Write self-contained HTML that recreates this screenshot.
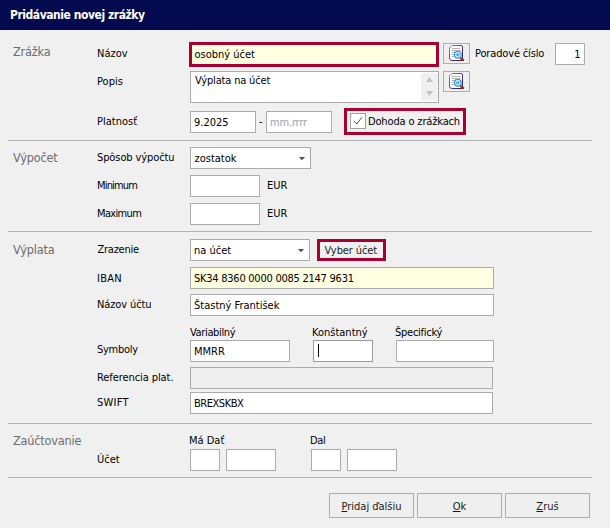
<!DOCTYPE html>
<html lang="sk">
<head>
<meta charset="utf-8">
<title>Pridávanie novej zrážky</title>
<style>
html,body{margin:0;padding:0;}
body{width:610px;height:528px;overflow:hidden;background:#f0f0f0;position:relative;
 font-family:"DejaVu Sans Condensed","DejaVu Sans","Liberation Sans",sans-serif;font-size:11px;color:#000;}
.a{position:absolute;white-space:nowrap;line-height:14px;}
.title{left:0;top:0;width:610px;height:30px;background:#03094f;}
.title span{position:absolute;left:10px;top:8px;color:#fff;font-weight:bold;font-size:12px;line-height:14px;letter-spacing:-0.45px;}
.sec{color:#6d6d6d;font-size:12.6px;line-height:16px;letter-spacing:-0.2px;}
.in{position:absolute;box-sizing:border-box;border:1px solid #ababab;background:#fff;}
.in span{position:absolute;left:3px;top:4px;line-height:14px;white-space:nowrap;}
.hl{position:absolute;box-sizing:border-box;border:3px solid #a80030;}
.sep{position:absolute;left:8px;width:584px;height:1px;background:#b2b2b2;}
.btn{position:absolute;box-sizing:border-box;border:1px solid #adadad;background:#efefef;text-align:center;line-height:26px;color:#1a1a1a;}
.yel{background:#ffffe1;}
.ph{color:#9ba3ab;}
u{text-decoration:underline;}
svg{position:absolute;left:0;top:0;overflow:visible;}
</style>
</head>
<body>
<div class="a title"><span>Pridávanie novej zrážky</span></div>

<div class="a sec" style="left:13px;top:44px;">Zrážka</div>
<div class="a" style="left:97px;top:47px;">Názov</div>
<div class="hl yel" style="left:189px;top:42px;width:250px;height:25px;"><span class="a" style="left:2.5px;top:3px;">osobný účet</span></div>
<div class="btn" style="left:443px;top:43px;width:27px;height:21px;"></div>
<div class="a" style="left:475px;top:47px;letter-spacing:-0.15px;">Poradové číslo</div>
<div class="in" style="left:555px;top:43px;width:30px;height:22px;"><span style="left:auto;right:3.5px;">1</span></div>

<div class="a" style="left:97px;top:75px;">Popis</div>
<div class="in" style="left:190px;top:71px;width:249px;height:32px;"><span style="top:2px;left:4px;letter-spacing:-0.17px;">Výplata na účet</span>
 <div style="position:absolute;left:230px;top:1px;width:17px;height:28px;background:#f0f0f0;"></div></div>
<div class="btn" style="left:443px;top:71px;width:27px;height:21px;"></div>

<div class="a" style="left:97px;top:115px;">Platnosť</div>
<div class="in" style="left:190px;top:111px;width:66px;height:22px;"><span>9.2025</span></div>
<div class="a" style="left:259px;top:115px;">-</div>
<div class="in" style="left:266px;top:111px;width:66px;height:22px;"><span class="ph" style="letter-spacing:-0.18px;">mm.rrrr</span></div>
<div class="hl" style="left:344px;top:108px;width:122px;height:27px;"></div>
<div class="in" style="left:350px;top:113px;width:16px;height:16px;border-color:#a0a0a0;"></div>
<div class="a" style="left:368px;top:115px;letter-spacing:-0.15px;">Dohoda o zrážkach</div>

<div class="sep" style="top:140px;"></div>

<div class="a sec" style="left:13px;top:150px;">Výpočet</div>
<div class="a" style="left:97px;top:151px;letter-spacing:-0.1px;">Spôsob výpočtu</div>
<div class="in" style="left:190px;top:147px;width:121px;height:22px;"><span style="left:3.5px;">zostatok</span></div>
<div class="a" style="left:97px;top:179px;letter-spacing:-0.82px;">Minimum</div>
<div class="in" style="left:190px;top:175px;width:70px;height:22px;"></div>
<div class="a" style="left:267px;top:179px;">EUR</div>
<div class="a" style="left:97px;top:207px;letter-spacing:-0.66px;">Maximum</div>
<div class="in" style="left:190px;top:203px;width:70px;height:22px;"></div>
<div class="a" style="left:267px;top:207px;">EUR</div>

<div class="sep" style="top:231px;"></div>

<div class="a sec" style="left:13px;top:242px;">Výplata</div>
<div class="a" style="left:97.5px;top:243px;letter-spacing:-0.25px;">Zrazenie</div>
<div class="in" style="left:190px;top:239px;width:120px;height:22px;"><span>na účet</span></div>
<div class="hl" style="left:317px;top:239px;width:69px;height:22px;"></div>
<div class="a" style="left:324.5px;top:244px;color:#222;letter-spacing:-0.1px;">Vyber účet</div>

<div class="a" style="left:97px;top:272px;letter-spacing:0.3px;">IBAN</div>
<div class="in yel" style="left:190px;top:267px;width:304px;height:22px;"><span style="letter-spacing:-0.25px;">SK34 8360 0000 0085 2147 9631</span></div>
<div class="a" style="left:97px;top:298px;letter-spacing:-0.12px;">Názov účtu</div>
<div class="in" style="left:190px;top:294px;width:304px;height:22px;"><span>Štastný František</span></div>

<div class="a" style="left:190px;top:326px;letter-spacing:-0.35px;">Variabilný</div>
<div class="a" style="left:312px;top:326px;">Konštantný</div>
<div class="a" style="left:395px;top:326px;letter-spacing:-0.25px;">Špecifický</div>
<div class="a" style="left:97px;top:343px;letter-spacing:-0.28px;">Symboly</div>
<div class="in" style="left:190px;top:340px;width:100px;height:22px;"><span>MMRR</span></div>
<div class="in" style="left:313px;top:340px;width:60px;height:22px;border-color:#9c9c9c;"><div style="position:absolute;left:4px;top:3px;width:1px;height:13px;background:#000;"></div></div>
<div class="in" style="left:396px;top:340px;width:98px;height:22px;"></div>

<div class="a" style="left:97px;top:371px;letter-spacing:-0.08px;">Referencia plat.</div>
<div class="in" style="left:190px;top:367px;width:303px;height:22px;background:#efefef;"></div>
<div class="a" style="left:97px;top:396px;letter-spacing:0.25px;">SWIFT</div>
<div class="in" style="left:190px;top:392px;width:303px;height:22px;"><span style="letter-spacing:-0.47px;">BREXSKBX</span></div>

<div class="sep" style="top:423px;"></div>

<div class="a sec" style="left:13px;top:433px;">Zaúčtovanie</div>
<div class="a" style="left:189px;top:434px;">Má Dať</div>
<div class="a" style="left:310px;top:434px;letter-spacing:-0.3px;">Dal</div>
<div class="a" style="left:97px;top:453px;">Účet</div>
<div class="in" style="left:190px;top:449px;width:30px;height:22px;"></div>
<div class="in" style="left:226px;top:449px;width:50px;height:22px;"></div>
<div class="in" style="left:311px;top:449px;width:30px;height:22px;"></div>
<div class="in" style="left:347px;top:449px;width:50px;height:22px;"></div>

<div class="sep" style="top:477px;"></div>

<div class="btn" style="left:329px;top:493px;width:85px;height:25px;"><u>P</u>ridaj ďalšiu</div>
<div class="btn" style="left:417px;top:493px;width:85px;height:25px;"><u>O</u>k</div>
<div class="btn" style="left:505px;top:493px;width:85px;height:25px;"><u>Z</u>ruš</div>

<svg width="610" height="528" viewBox="0 0 610 528">
 <defs>
  <g id="ic">
   <path d="M3 0.5 H12 Q13.5 0.5 13.5 2 V15.5 H3 Q0.5 15.5 0.5 13 V3 Z" fill="#fff" stroke="url(#dg)" stroke-width="1"/>
   <path d="M2.5 3.5H11.5M2.5 5.5H11.5M2.5 7.5H6M2.5 9.5H5M2.5 11.5H5" stroke="#b8b4b4" stroke-width="1" fill="none"/>
   <path d="M11.9 13.3 L14.1 15" stroke="#8b3a0e" stroke-width="2.3" stroke-linecap="round"/>
   <circle cx="8.8" cy="9.7" r="3.3" fill="#f2faff" stroke="#2a9cf4" stroke-width="1.3"/>
   <circle cx="8.8" cy="9.7" r="1.8" fill="#52acff"/>
  </g>
  <linearGradient id="dg" x1="0" y1="0" x2="1" y2="1"><stop offset="0" stop-color="#8c98c8"/><stop offset="0.45" stop-color="#5a3a8a"/><stop offset="1" stop-color="#2a1460"/></linearGradient>
 </defs>
 <use href="#ic" x="449" y="45"/>
 <use href="#ic" x="449" y="73"/>
 <!-- scrollbar arrows -->
 <path d="M426 82 L429.5 77 L433 82 Z" fill="#c2c2c2"/>
 <path d="M426 91 L429.5 96 L433 91 Z" fill="#c2c2c2"/>
 <!-- checkbox tick -->
 <path d="M354 121 L356.8 124 L361.8 117.3" fill="none" stroke="#45404a" stroke-width="0.95"/>
 <!-- select arrows -->
 <path d="M299 157 L305 157 L302 160.3 Z" fill="#4a4f55"/>
 <path d="M298 249 L304 249 L301 252.2 Z" fill="#4a4f55"/>
</svg>
</body>
</html>
